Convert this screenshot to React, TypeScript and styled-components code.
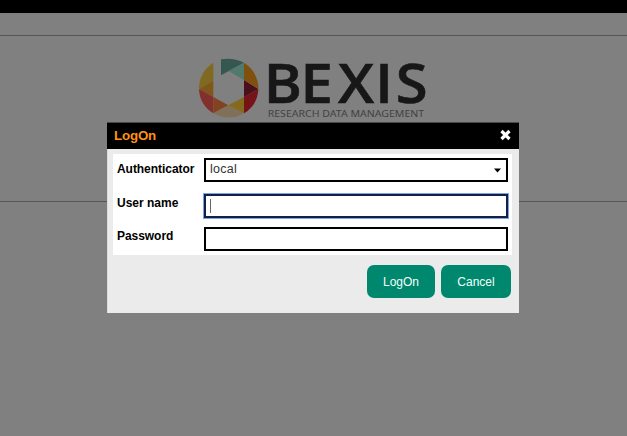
import React from "react";
import styled, { createGlobalStyle } from "styled-components";

const GlobalStyle = createGlobalStyle`
  * { box-sizing: border-box; }
  body {
    margin: 0;
    overflow: hidden;
    background: #808080;
    font-family: "Liberation Sans", Arial, sans-serif;
  }
`;

const Page = styled.div`
  position: relative;
  height: 436px;
  background: #808080;
`;

const TopBar = styled.div`
  height: 13px;
  background: #000;
`;

const Banner = styled.header`
  height: 167px;
  margin-top: 22px;
  border-top: 1px solid #565656;
  border-bottom: 1px solid #565656;
  padding: 14px 0 0 190px;
`;

const Logo = styled.svg`
  display: block;
  width: 245px;
  height: 75px;
  overflow: visible;
`;

const Dialog = styled.section`
  position: absolute;
  left: 107px;
  top: 123px;
  width: 412px;
  height: 190px;
  background: #ebebeb;
  border-left: 1px solid #dcdcdc;
  box-shadow: 0 -1px 0 #4a4a4a;
`;

const TitleBar = styled.div`
  display: flex;
  align-items: center;
  justify-content: space-between;
  height: 26px;
  margin-left: -1px;
  padding: 0 7px;
  background: #000;
`;

const Title = styled.h1`
  margin: 0;
  color: #ff9114;
  font-size: 13.3px;
  line-height: 24px;
  letter-spacing: -0.15px;
`;

const CloseButton = styled.button`
  display: flex;
  padding: 0;
  border: 0;
  margin-top: -2px;
  background: none;
`;

const Panel = styled.div`
  display: flex;
  flex-direction: column;
  height: 101px;
  margin: 5px 7px 0 5px;
  padding: 4px 4px 0;
  background: #fff;
`;

const Row = styled.div<{ $gap: number }>`
  display: grid;
  grid-template-columns: 87px 304px;
  height: 24px;
  margin-bottom: ${(p) => p.$gap}px;
`;

const Label = styled.label<{ $spacing: number; $line: number }>`
  color: #000;
  font-size: 12px;
  font-weight: bold;
  line-height: ${(p) => p.$line}px;
  letter-spacing: ${(p) => p.$spacing}px;
  white-space: nowrap;
`;

const Field = styled.div<{ $focused?: boolean }>`
  display: flex;
  align-items: center;
  justify-content: space-between;
  padding: 0 4px;
  border: 2px solid ${(p) => (p.$focused ? "#10224c" : "#000")};
  box-shadow: ${(p) => (p.$focused ? "0 0 0 1px #7da2e2" : "none")};
  background: #fff;
  color: #333;
  font-size: 12.5px;
  letter-spacing: 0.25px;
`;

const Value = styled.span`
  position: relative;
  top: -1px;
`;

const Caret = styled.span`
  width: 1px;
  height: 14px;
  background: #666;
`;

const Actions = styled.div`
  display: flex;
  justify-content: flex-end;
  gap: 6px;
  padding: 10px 8px 0 0;
`;

const ActionButton = styled.button<{ $width: number }>`
  width: ${(p) => p.$width}px;
  height: 33px;
  padding: 0;
  border: 0;
  border-radius: 7px;
  background: #00886e;
  color: #f3fffb;
  font: 12px "Liberation Sans", Arial, sans-serif;
`;

const segments = [
  { fill: "#806a21", d: "M70 38A90 90 0 0 0 27 117L70 92Z" },
  { fill: "#805719", d: "M27 117L70 92V141Z" },
  { fill: "#81302d", d: "M27 117A90 90 0 0 0 70 190V141Z" },
  { fill: "#824321", d: "M70 141L115 166L70 190Z" },
  { fill: "#817058", d: "M70 190L115 166L162 190A90 90 0 0 1 70 190Z" },
  { fill: "#836a1d", d: "M115 166L162 141V190Z" },
  { fill: "#751319", d: "M162 141L205 117A90 90 0 0 1 162 190Z" },
  { fill: "#49101b", d: "M162 90L205 117L162 141Z" },
  { fill: "#80500f", d: "M162 38A90 90 0 0 1 205 117L162 90Z" },
  { fill: "#36574f", d: "M93 28Q130 22 162 38L93 76Z" },
  { fill: "#517a6c", d: "M115 63L162 38V90Z" },
];

export default function App() {
  return (
    <>
      <GlobalStyle />
      <Page>
        <TopBar />
        <Banner>
          <Logo viewBox="0 0 245 75" aria-label="BEXIS Research Data Management">
            <g transform="scale(.33333)">
              {segments.map((s) => (
                <path key={s.d} d={s.d} fill={s.fill} />
              ))}
            </g>
            <text transform="scale(1.08 1)" x="68.4 102.3 137 171.6 190.6" y="52.7" fill="#171717" stroke="#171717" strokeWidth="0.6" fontFamily="Open Sans, sans-serif" fontWeight="600" fontSize="53.7">BEXIS</text>
            <text x="77.7" y="67" fill="#424242" fontFamily="Noto Sans, sans-serif" fontSize="9.8" textLength="156.5" lengthAdjust="spacingAndGlyphs">RESEARCH DATA MANAGEMENT</text>
          </Logo>
        </Banner>
        <Dialog role="dialog">
          <TitleBar>
            <Title>LogOn</Title>
            <CloseButton aria-label="Close">
              <svg width="13" height="12" viewBox="0 0 13 12">
                <path d="M2.5 2L10.5 10M10.5 2L2.5 10" stroke="#fff" strokeWidth="3.2" />
              </svg>
            </CloseButton>
          </TitleBar>
          <Panel>
            <Row $gap={12}>
              <Label $spacing={-0.05} $line={22}>Authenticator</Label>
              <Field>
                <Value>local</Value>
                <svg width="9" height="5" viewBox="0 0 9 5">
                  <path d="M1 0.5H8L4.5 4.5Z" fill="#000" />
                </svg>
              </Field>
            </Row>
            <Row $gap={9}>
              <Label $spacing={0} $line={18}>User name</Label>
              <Field $focused>
                <Caret />
              </Field>
            </Row>
            <Row $gap={0}>
              <Label $spacing={-0.05} $line={18}>Password</Label>
              <Field />
            </Row>
          </Panel>
          <Actions>
            <ActionButton $width={68}>LogOn</ActionButton>
            <ActionButton $width={70}>Cancel</ActionButton>
          </Actions>
        </Dialog>
      </Page>
    </>
  );
}
